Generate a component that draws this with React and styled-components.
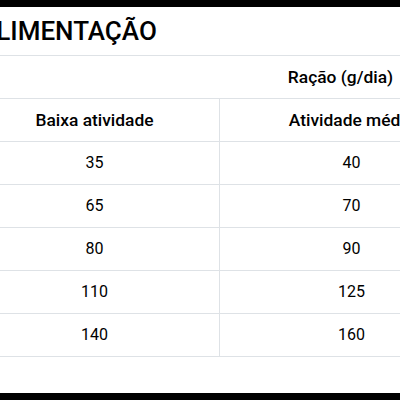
import styled, { createGlobalStyle } from 'styled-components';

const rows = [
  [35, 40, 45],
  [65, 70, 80],
  [80, 90, 100],
  [110, 125, 140],
  [140, 160, 180],
];

const GlobalStyle = createGlobalStyle`
  html, body {
    margin: 0;
    padding: 0;
    background: #fff;
  }
  body {
    font-family: Roboto, "Liberation Sans", sans-serif;
    color: #111;
  }
`;

const App = () => {
  return (
    <>
      <GlobalStyle />
      <Page>
        <Bar />
        <Viewport>
          <Content>
            <Title>Alimentação</Title>
            <Table>
              <colgroup>
                <col style={{ width: 250 }} />
                <col style={{ width: 264 }} />
                <col style={{ width: 228 }} />
              </colgroup>
              <thead>
                <tr>
                  <HeadCell colSpan={3}>Ração (g/dia)</HeadCell>
                </tr>
                <tr>
                  <HeadCell>Baixa atividade</HeadCell>
                  <HeadCell>Atividade média</HeadCell>
                  <HeadCell>Alta atividade</HeadCell>
                </tr>
              </thead>
              <tbody>
                {rows.map((row, i) => (
                  <tr key={i}>
                    {row.map((value, j) => (
                      <Cell key={j}>{value}</Cell>
                    ))}
                  </tr>
                ))}
              </tbody>
            </Table>
          </Content>
        </Viewport>
        <Bar />
      </Page>
    </>
  );
};

const Page = styled.div`
  width: 400px;
  height: 400px;
  display: flex;
  flex-direction: column;
  overflow: hidden;
`;

const Bar = styled.div`
  height: 7px;
  flex-shrink: 0;
  background: #000;
`;

const Viewport = styled.div`
  flex: 1;
  overflow: hidden;
`;

const Content = styled.div`
  margin-left: -31px;
  width: max-content;
`;

const Title = styled.h2`
  margin: 0;
  padding-left: 10px;
  height: 48px;
  line-height: 48px;
  font-size: 26px;
  font-weight: 500;
  text-transform: uppercase;
  color: #000;
`;

const Table = styled.table`
  border-collapse: collapse;
  table-layout: fixed;
  width: 742px;
`;

const HeadCell = styled.th`
  border: 1px solid #dee2e6;
  padding: 9px 8px;
  height: 24px;
  line-height: 24px;
  font-size: 17.4px;
  font-weight: 500;
  text-align: center;
  white-space: nowrap;
  color: #000;
`;

const Cell = styled.td`
  border: 1px solid #dee2e6;
  padding: 9px 8px;
  height: 24px;
  line-height: 24px;
  font-size: 16px;
  text-align: center;
  color: #000;
`;

export default App;
